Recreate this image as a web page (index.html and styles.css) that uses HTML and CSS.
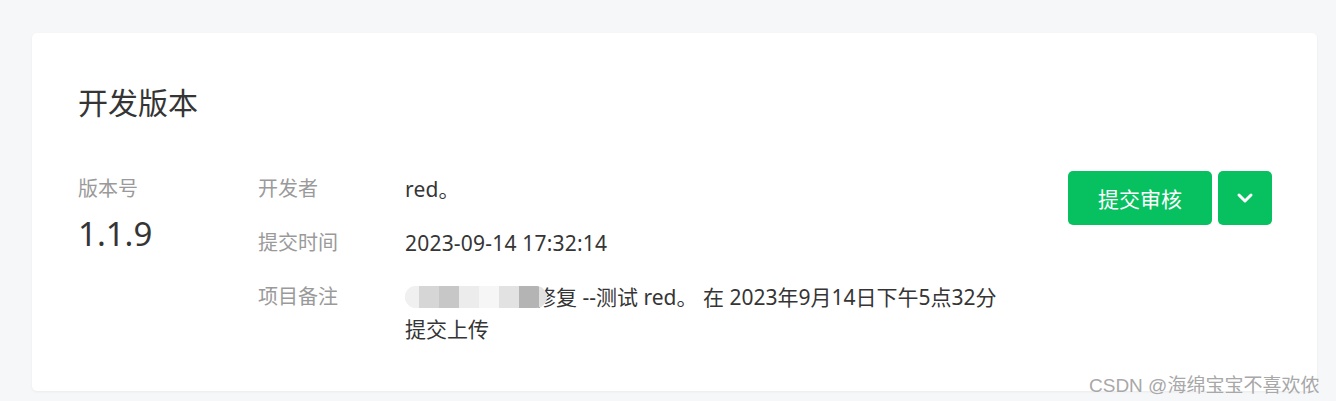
FILE: index.html
```html
<!DOCTYPE html>
<html lang="zh-CN">
<head>
<meta charset="utf-8">
<title>开发版本</title>
<link rel="stylesheet" href="styles.css">
</head>
<body>
<div class="page">
  <section class="card">
    <h2 class="title">开发版本</h2>
    <div class="body">
      <div class="version">
        <div class="label">版本号</div>
        <div class="version-num">1.1.9</div>
      </div>
      <div class="info">
        <div class="row"><div class="label key">开发者</div><div class="value">red。</div></div>
        <div class="row"><div class="label key">提交时间</div><div class="value">2023-09-14 17:32:14</div></div>
        <div class="row"><div class="label key">项目备注</div><div class="value note"><span class="redact"><span class="blk b1"></span><span class="blk b2"></span><span class="blk b3"></span><span class="blk b4"></span><span class="blk b5"></span><span class="blk b6"></span><span class="blk b7"></span></span>修复 --测试 red。 在 2023年9月14日下午5点32分<br>提交上传</div></div>
      </div>
      <div class="actions">
        <button class="btn primary">提交审核</button>
        <button class="btn more" aria-label="更多"><svg width="18" height="12" viewBox="0 0 18 12"><path d="M3 3 L9 9 L15 3" fill="none" stroke="#fff" stroke-width="3" stroke-linecap="round" stroke-linejoin="round"/></svg></button>
      </div>
    </div>
  </section>
  <div class="watermark">CSDN @海绵宝宝不喜欢侬</div>
</div>
</body>
</html>
```

FILE: styles.css
```css
html, body {
  margin: 0;
  padding: 0;
  background: #f6f7f9;
}
body {
  font-family: "Noto Sans", "Noto Sans CJK SC", sans-serif;
  color: #353535;
}
.page {
  position: relative;
  width: 1336px;
  height: 401px;
  padding: 33px 19px 0 32px;
  box-sizing: border-box;
}
.card {
  background: #fff;
  border-radius: 5px;
  box-shadow: 0 1px 3px rgba(0,0,0,0.05);
  height: 358px;
  box-sizing: border-box;
  padding: 50px 45px 0 46px;
}
.title {
  margin: 0;
  font-size: 30px;
  font-weight: 400;
  line-height: 40px;
  color: #353535;
}
.body {
  display: flex;
  margin-top: 51px;
}
.label {
  font-size: 20px;
  color: #9a9a9a;
  line-height: 30px;
}
.version {
  width: 180px;
  flex: none;
}
.version-num {
  font-size: 33px;
  line-height: 44px;
  margin-top: 8px;
  color: #353535;
}
.info {
  flex: 1;
  display: flex;
  flex-direction: column;
  gap: 24px;
}
.row {
  display: flex;
}
.key {
  width: 147px;
  flex: none;
}
.value {
  font-size: 21px;
  letter-spacing: 0.2px;
  line-height: 30px;
  color: #353535;
}
.note {
  line-height: 32px;
  margin-top: -1px;
  letter-spacing: 0;
}
.redact {
  display: inline-flex;
  vertical-align: middle;
  width: 142px;
  height: 22px;
  margin-top: -4px;
  margin-right: -12px;
  position: relative;
  border-radius: 11px;
  overflow: hidden;
  background: linear-gradient(90deg, #f2f2f2, #ececec 60%, #e0e0e0);
}
.blk { display: block; height: 100%; width: 20px; }
.b1 { background: #f0f0f0; width: 14px; }
.b2 { background: #d6d6d6; }
.b3 { background: #c7c7c7; }
.b4 { background: #ececec; }
.b5 { background: #f6f6f6; }
.b6 { background: #e2e2e2; }
.b7 { background: #b4b4b4; }
.actions {
  display: flex;
  gap: 6px;
  margin-top: -3px;
  align-self: flex-start;
}
.btn {
  border: 0;
  border-radius: 5px;
  background: #07c160;
  color: #fff;
  height: 54px;
  font-family: "Noto Sans CJK SC", sans-serif;
  font-size: 21px;
  cursor: pointer;
  display: flex;
  align-items: center;
  justify-content: center;
  padding: 0;
}
.primary { width: 144px; }
.more { width: 54px; }
.watermark {
  position: absolute;
  left: 1089px;
  top: 370px;
  font-family: "Liberation Sans", "Noto Sans CJK SC", sans-serif;
  font-size: 19px;
  color: #a8a8a8;
  text-shadow: 0 0 1px #fff;
  white-space: nowrap;
}
```
